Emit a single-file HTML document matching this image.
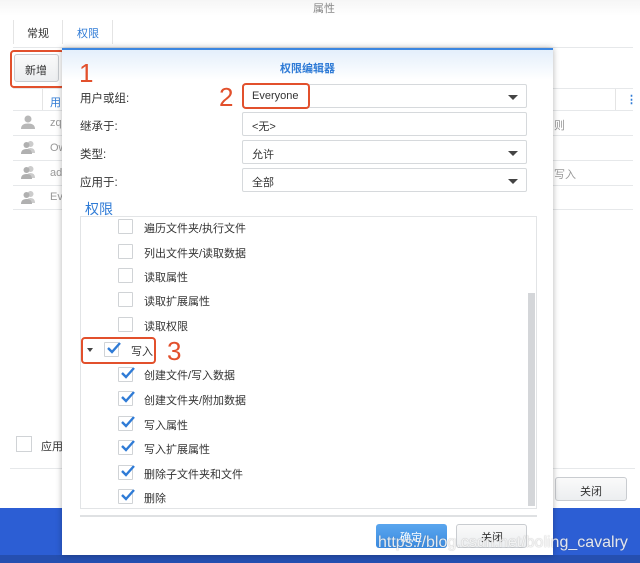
<!DOCTYPE html>
<html><head><meta charset="utf-8"><style>
*{margin:0;padding:0;box-sizing:border-box}
body{width:640px;height:563px;overflow:hidden;background:#fff;position:relative;font-family:"Liberation Sans","Noto Sans CJK SC",sans-serif;font-size:11px;color:#333}
.a{position:absolute}
.t{position:absolute;white-space:nowrap}
.hl{position:absolute;height:1px;background:#e6e8ea}
.red{position:absolute;border:2px solid #e2502c;border-radius:4px}
.num{position:absolute;color:#e2502c;font-size:26px;line-height:26px;font-family:"Liberation Sans",sans-serif}
.fld{position:absolute;left:242px;width:285px;height:24px;border:1px solid #d6d9dc;border-radius:2px;background:#fff}
.fld span{position:absolute;left:9px;top:5px}
.arr{position:absolute;right:8px;top:10px;width:0;height:0;border-left:5px solid transparent;border-right:5px solid transparent;border-top:5px solid #444}
.cb{position:absolute;width:15px;height:15px;border:1px solid #d0d3d6;background:#fff;border-radius:1px}
.ck{position:absolute;left:1px;top:-2px}
.lb{font-size:11.5px}
</style></head><body>
<div class="a" style="left:0;top:0;width:640px;height:16px;background:linear-gradient(#f6f6f6,#fff)"></div>
<div class="t" style="left:313px;top:0;color:#888;font-size:11px">属性</div>
<div class="a" style="left:13px;top:20px;width:1px;height:24px;background:#e4e4e4"></div>
<div class="a" style="left:62px;top:20px;width:1px;height:24px;background:#e4e4e4"></div>
<div class="a" style="left:112px;top:20px;width:1px;height:24px;background:#e4e4e4"></div>
<div class="t" style="left:27px;top:25px">常规</div>
<div class="t" style="left:77px;top:25px;color:#2f7bd6">权限</div>
<div class="hl" style="left:13px;top:47px;width:620px"></div>
<div class="a" style="left:14px;top:54px;width:45px;height:28px;border:1px solid #c9ccd0;border-radius:3px;background:linear-gradient(#fafafa,#eceef0)"></div>
<div class="t" style="left:25px;top:62px">新增</div>
<div class="red" style="left:10px;top:50px;width:55px;height:38px"></div>
<div class="hl" style="left:13px;top:88px;width:620px"></div>
<div class="t" style="left:50px;top:94px;color:#2f7bd6">用</div>
<div class="a" style="left:42px;top:89px;width:1px;height:21px;background:#e4e4e4"></div>
<div class="a" style="left:615px;top:89px;width:1px;height:21px;background:#e4e4e4"></div>
<div class="t" style="left:626px;top:93px;color:#2f7bd6;font-weight:bold">⋮</div>
<div class="hl" style="left:13px;top:110px;width:620px"></div>
<div class="hl" style="left:13px;top:135px;width:620px"></div>
<div class="hl" style="left:13px;top:160px;width:620px"></div>
<div class="hl" style="left:13px;top:185px;width:620px"></div>
<div class="hl" style="left:13px;top:209px;width:620px"></div>
<svg class="a" style="left:20px;top:114px" width="16" height="16" viewBox="0 0 16 16"><circle cx="8" cy="5" r="3.5" fill="#b8b8b8"/><path d="M1 15 Q1 9.5 8 9.5 Q15 9.5 15 15Z" fill="#b8b8b8"/></svg>
<svg class="a" style="left:20px;top:139px" width="16" height="16" viewBox="0 0 16 16"><circle cx="10.5" cy="5" r="3" fill="#ccc"/><path d="M6 14 Q6 9 10.5 9 Q15 9 15 14Z" fill="#ccc"/><circle cx="6.5" cy="6" r="3" fill="#b0b0b0"/><path d="M1 15 Q1 10 6.5 10 Q12 10 12 15Z" fill="#b0b0b0"/></svg>
<svg class="a" style="left:20px;top:164px" width="16" height="16" viewBox="0 0 16 16"><circle cx="10.5" cy="5" r="3" fill="#ccc"/><path d="M6 14 Q6 9 10.5 9 Q15 9 15 14Z" fill="#ccc"/><circle cx="6.5" cy="6" r="3" fill="#b0b0b0"/><path d="M1 15 Q1 10 6.5 10 Q12 10 12 15Z" fill="#b0b0b0"/></svg>
<svg class="a" style="left:20px;top:189px" width="16" height="16" viewBox="0 0 16 16"><circle cx="10.5" cy="5" r="3" fill="#ccc"/><path d="M6 14 Q6 9 10.5 9 Q15 9 15 14Z" fill="#ccc"/><circle cx="6.5" cy="6" r="3" fill="#b0b0b0"/><path d="M1 15 Q1 10 6.5 10 Q12 10 12 15Z" fill="#b0b0b0"/></svg>
<div class="t" style="left:50px;top:117px;color:#999">zq</div>
<div class="t" style="left:50px;top:142px;color:#999">Ow</div>
<div class="t" style="left:50px;top:167px;color:#999">ad</div>
<div class="t" style="left:50px;top:191px;color:#999">Ev</div>
<div class="t" style="left:554px;top:117px;color:#999">则</div>
<div class="t" style="left:554px;top:166px;color:#999">写入</div>
<div class="a" style="left:16px;top:436px;width:16px;height:16px;border:1px solid #d0d3d6"></div>
<div class="t" style="left:41px;top:438px">应用</div>
<div class="hl" style="left:10px;top:468px;width:625px"></div>
<div class="a" style="left:555px;top:477px;width:72px;height:24px;border:1px solid #c9ccd0;border-radius:3px;background:linear-gradient(#fafafa,#eceef0)"></div>
<div class="t" style="left:580px;top:483px">关闭</div>
<div class="a" style="left:0;top:508px;width:640px;height:55px;background:#2c5ed4"></div>
<div class="a" style="left:0;top:555px;width:640px;height:8px;background:#254fb0"></div>
<div class="a" style="left:62px;top:48px;width:491px;height:507px;background:#fff;box-shadow:0 0 6px rgba(0,0,0,.3);border-top:2px solid #3b86e0"></div>
<div class="a" style="left:62px;top:50px;width:491px;height:30px;background:linear-gradient(#e4effb,#fff)"></div>
<div class="t" style="left:280px;top:60px;color:#2f7bd6;font-weight:bold;font-size:11px">权限编辑器</div>
<div class="num" style="left:79px;top:60px">1</div>
<div class="t lb" style="left:80px;top:90px">用户或组:</div>
<div class="t lb" style="left:80px;top:118px">继承于:</div>
<div class="t lb" style="left:80px;top:146px">类型:</div>
<div class="t lb" style="left:80px;top:174px">应用于:</div>
<div class="fld" style="top:84px"><span>Everyone</span><div class="arr"></div></div>
<div class="fld" style="top:112px"><span>&lt;无&gt;</span></div>
<div class="fld" style="top:140px"><span>允许</span><div class="arr"></div></div>
<div class="fld" style="top:168px"><span>全部</span><div class="arr"></div></div>
<div class="red" style="left:242px;top:83px;width:68px;height:26px"></div>
<div class="num" style="left:219px;top:84px">2</div>
<div class="t" style="left:85px;top:199px;color:#2f7bd6;font-size:14px">权限</div>
<div class="a" style="left:80px;top:216px;width:457px;height:293px;border:1px solid #e2e4e6"></div>
<div class="a" style="left:528px;top:293px;width:7px;height:213px;background:#d4d6d9"></div>
<div class="hl" style="left:80px;top:515px;width:457px;background:#dfe1e3;height:2px"></div>

<div class="cb" style="left:118px;top:219px"></div><div class="t" style="left:144px;top:220px">遍历文件夹/执行文件</div>
<div class="cb" style="left:118px;top:244px"></div><div class="t" style="left:144px;top:245px">列出文件夹/读取数据</div>
<div class="cb" style="left:118px;top:268px"></div><div class="t" style="left:144px;top:269px">读取属性</div>
<div class="cb" style="left:118px;top:292px"></div><div class="t" style="left:144px;top:293px">读取扩展属性</div>
<div class="cb" style="left:118px;top:317px"></div><div class="t" style="left:144px;top:318px">读取权限</div>

<div class="a" style="left:87px;top:348px;border-left:3px solid transparent;border-right:3px solid transparent;border-top:4px solid #444"></div>
<div class="cb" style="left:104px;top:342px"><svg class="ck" width="16" height="14" viewBox="0 0 16 14"><path d="M2 7 L6 11 L14 2" fill="none" stroke="#2f7bd6" stroke-width="2.4"/></svg></div>
<div class="t" style="left:131px;top:343px">写入</div>
<div class="red" style="left:81px;top:337px;width:75px;height:27px"></div>
<div class="num" style="left:167px;top:338px">3</div>

<div class="cb" style="left:118px;top:367px"><svg class="ck" width="16" height="14" viewBox="0 0 16 14"><path d="M2 7 L6 11 L14 2" fill="none" stroke="#2f7bd6" stroke-width="2.4"/></svg></div><div class="t" style="left:144px;top:367px">创建文件/写入数据</div>
<div class="cb" style="left:118px;top:391px"><svg class="ck" width="16" height="14" viewBox="0 0 16 14"><path d="M2 7 L6 11 L14 2" fill="none" stroke="#2f7bd6" stroke-width="2.4"/></svg></div><div class="t" style="left:144px;top:392px">创建文件夹/附加数据</div>
<div class="cb" style="left:118px;top:416px"><svg class="ck" width="16" height="14" viewBox="0 0 16 14"><path d="M2 7 L6 11 L14 2" fill="none" stroke="#2f7bd6" stroke-width="2.4"/></svg></div><div class="t" style="left:144px;top:417px">写入属性</div>
<div class="cb" style="left:118px;top:440px"><svg class="ck" width="16" height="14" viewBox="0 0 16 14"><path d="M2 7 L6 11 L14 2" fill="none" stroke="#2f7bd6" stroke-width="2.4"/></svg></div><div class="t" style="left:144px;top:441px">写入扩展属性</div>
<div class="cb" style="left:118px;top:465px"><svg class="ck" width="16" height="14" viewBox="0 0 16 14"><path d="M2 7 L6 11 L14 2" fill="none" stroke="#2f7bd6" stroke-width="2.4"/></svg></div><div class="t" style="left:144px;top:466px">删除子文件夹和文件</div>
<div class="cb" style="left:118px;top:489px"><svg class="ck" width="16" height="14" viewBox="0 0 16 14"><path d="M2 7 L6 11 L14 2" fill="none" stroke="#2f7bd6" stroke-width="2.4"/></svg></div><div class="t" style="left:144px;top:490px">删除</div>

<div class="a" style="left:376px;top:524px;width:71px;height:24px;border-radius:3px;background:linear-gradient(#5aa6ee,#3a8ae0)"></div>
<div class="t" style="left:400px;top:529px;color:#fff">确定</div>
<div class="a" style="left:456px;top:524px;width:71px;height:24px;border:1px solid #c9ccd0;border-radius:3px;background:linear-gradient(#fafafa,#eceef0)"></div>
<div class="t" style="left:481px;top:529px">关闭</div>
<div class="t" style="left:378px;top:534px;font-size:16px;color:rgba(255,255,255,.85);text-shadow:0 0 1px rgba(90,90,90,.6)">https://blog.csdn.net/boling_cavalry</div>
</body></html>
